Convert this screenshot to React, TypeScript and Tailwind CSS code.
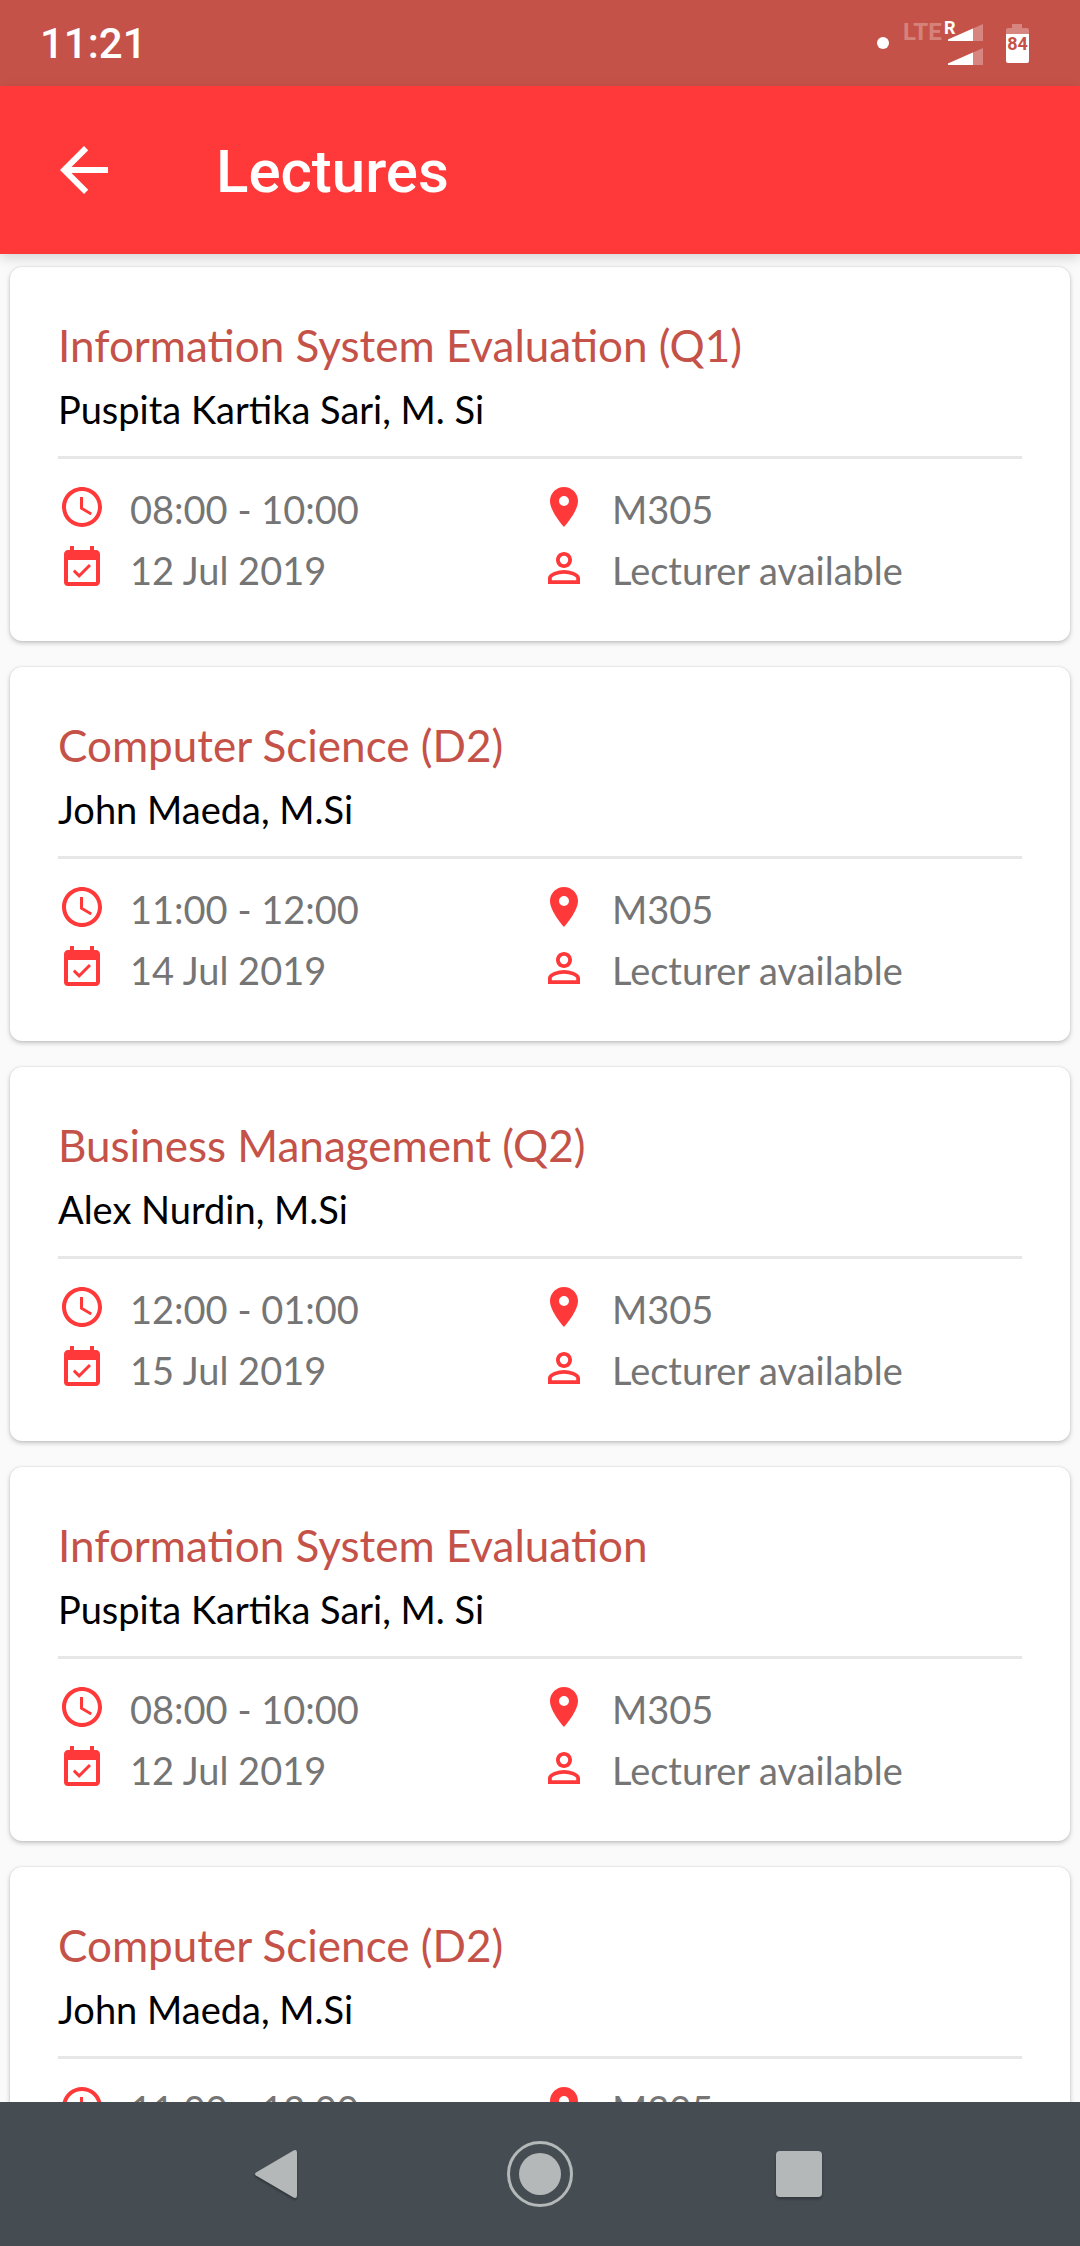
import React from "react";
import type { IconType } from "react-icons";
import {
  MdAccessTime,
  MdArrowBack,
  MdEventAvailable,
  MdLocationOn,
  MdPersonOutline,
} from "react-icons/md";

type Lecture = {
  title: string;
  lecturer: string;
  time: string;
  date: string;
  room: string;
  status: string;
};

const lectures: Lecture[] = [
  { title: "Information System Evaluation (Q1)", lecturer: "Puspita Kartika Sari, M. Si", time: "08:00 - 10:00", date: "12 Jul 2019", room: "M305", status: "Lecturer available" },
  { title: "Computer Science (D2)", lecturer: "John Maeda, M.Si", time: "11:00 - 12:00", date: "14 Jul 2019", room: "M305", status: "Lecturer available" },
  { title: "Business Management (Q2)", lecturer: "Alex Nurdin, M.Si", time: "12:00 - 01:00", date: "15 Jul 2019", room: "M305", status: "Lecturer available" },
  { title: "Information System Evaluation", lecturer: "Puspita Kartika Sari, M. Si", time: "08:00 - 10:00", date: "12 Jul 2019", room: "M305", status: "Lecturer available" },
  { title: "Computer Science (D2)", lecturer: "John Maeda, M.Si", time: "11:00 - 12:00", date: "14 Jul 2019", room: "M305", status: "Lecturer available" },
];

function SignalIcon() {
  return (
    <svg className="h-[17px] w-[35px]" viewBox="0 0 35 17" aria-hidden="true">
      <path d="M0 17V15.500L35 0V17Z" fill="#fff" fillOpacity="0.3" />
      <path d="M0 17V15.500L25 4.400V17Z" fill="#fff" />
    </svg>
  );
}

function StatusBar() {
  return (
    <div className="flex h-[86px] shrink-0 items-center justify-between bg-[#c55248] pr-[51px] pl-10 text-white">
      <span className="pt-[2px] text-[42px] leading-none font-medium">11:21</span>
      <div className="flex items-center">
        <span className="mr-[14px] size-3 rounded-full bg-white" />
        <div className="relative mr-[23px] flex h-[43px] w-[80px] flex-col items-end gap-[7px] pt-[2px]">
          <span className="absolute top-0 left-0 text-2xl leading-[20px] font-bold text-white/30">LTE</span>
          <span className="absolute top-0 left-[41px] text-lg leading-[12px] font-bold">R</span>
          <SignalIcon />
          <SignalIcon />
        </div>
        <div className="relative flex h-[39px] w-[23px] items-end justify-center">
          <svg className="absolute inset-0 size-full" viewBox="0 0 23 39" aria-hidden="true">
            <path d="M6 0H16V4H21Q23 4 23 6V10H0V6Q0 4 2 4H6Z" fill="#fff" fillOpacity="0.3" />
            <path d="M0 10H23V37Q23 39 21 39H2Q0 39 0 37Z" fill="#fff" />
          </svg>
          <span className="relative text-lg leading-[38px] font-bold text-[#c55248]">84</span>
        </div>
      </div>
    </div>
  );
}

function Detail({ icon: Icon, label }: { icon: IconType; label: string }) {
  return (
    <div className="flex h-12 items-start gap-6">
      <Icon className="size-12 shrink-0 text-[#ff393a]" aria-hidden="true" />
      <span className="text-[38px] leading-[52px] whitespace-nowrap text-[#757575]">{label}</span>
    </div>
  );
}

function LectureCard({ lecture }: { lecture: Lecture }) {
  return (
    <article className="shrink-0 rounded-xl bg-white px-12 pt-[50px] pb-[49px] font-['Lato','Open_Sans',sans-serif] shadow-[0_2px_5px_rgba(0,0,0,0.22),0_0_2px_rgba(0,0,0,0.12)]">
      <h2 className="text-[44px] leading-[56px] text-[#c55248]">{lecture.title}</h2>
      <p className="mt-2 text-[38px] leading-[56px] text-black">{lecture.lecturer}</p>
      <hr className="mt-[19px] mb-6 border-t-3 border-[#e7e7e7]" />
      <div className="grid grid-cols-2 gap-y-[13px]">
        <Detail icon={MdAccessTime} label={lecture.time} />
        <Detail icon={MdLocationOn} label={lecture.room} />
        <Detail icon={MdEventAvailable} label={lecture.date} />
        <Detail icon={MdPersonOutline} label={lecture.status} />
      </div>
    </article>
  );
}

function NavBar() {
  return (
    <nav className="flex h-36 shrink-0 items-center justify-center gap-[193px] bg-[#454d52] text-[#b4b8b9]">
      <button type="button" aria-label="Back" className="flex size-[66px] items-center justify-center">
        <svg className="h-[48px] w-[52px] drop-shadow-[0_2px_1px_rgba(0,0,0,0.3)]" viewBox="0 0 52 48" fill="currentColor" aria-hidden="true">
          <path d="M1 22.500L38.500 .5Q42 -1 42 3V45Q42 49 38.500 47.500L1 25.500Q-1 24 1 22.500Z" />
        </svg>
      </button>
      <button type="button" aria-label="Home" className="size-[66px]">
        <svg className="size-full" viewBox="0 0 66 66" aria-hidden="true">
          <circle cx="33" cy="33" r="31.500" fill="none" stroke="currentColor" strokeWidth="3" />
          <circle cx="33" cy="33" r="21" fill="currentColor" />
        </svg>
      </button>
      <button type="button" aria-label="Recent apps" className="flex size-[66px] items-center justify-center">
        <span className="size-[46px] rounded bg-[#b4b8b9] shadow-[0_2px_3px_rgba(0,0,0,0.3)]" />
      </button>
    </nav>
  );
}

export default function App() {
  return (
    <div className="flex h-screen flex-col overflow-hidden bg-[#fafafa] font-['Roboto',sans-serif]">
      <StatusBar />
      <header className="relative z-10 flex h-[168px] shrink-0 items-center gap-24 bg-[#ff393a] px-12 text-white shadow-[0_4px_12px_rgba(0,0,0,0.15)]">
        <button type="button" aria-label="Go back" className="size-[72px]">
          <MdArrowBack className="size-full" />
        </button>
        <h1 className="pt-1 text-[60px] leading-[72px] font-medium">Lectures</h1>
      </header>
      <main className="flex min-h-0 flex-1 flex-col gap-[26px] overflow-hidden px-[10px] pt-[13px]">
        {lectures.map((lecture, i) => (
          <LectureCard key={i} lecture={lecture} />
        ))}
      </main>
      <NavBar />
    </div>
  );
}
